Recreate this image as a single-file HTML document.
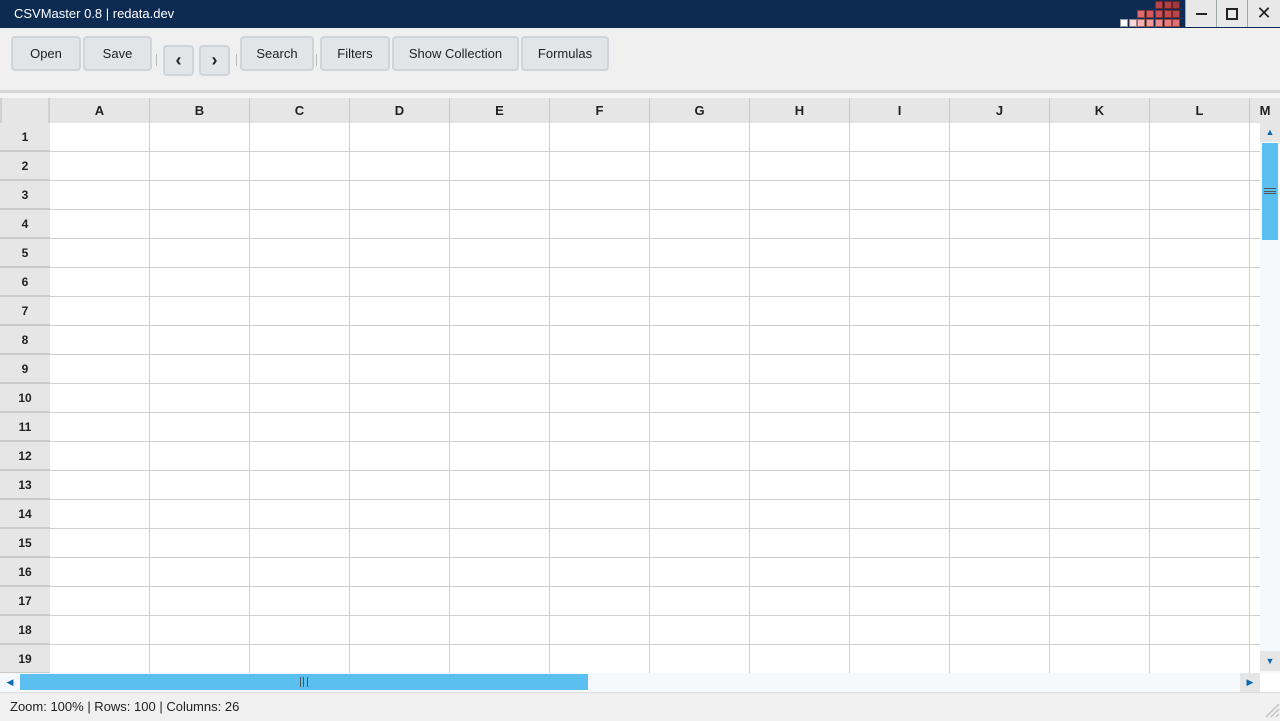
<!DOCTYPE html>
<html><head><meta charset="utf-8"><style>
*{margin:0;padding:0;box-sizing:border-box}
body{width:1280px;height:720px;overflow:hidden;background:#f0f0f0;font-family:"Liberation Sans",sans-serif;position:relative}
.a{position:absolute}
#title{left:0;top:0;width:1280px;height:28px;background:#0c2a52;color:#fff;font-size:13px;line-height:28px;padding-left:14px}
.sq{position:absolute;width:8px;height:8px;border:1px solid rgba(0,0,0,.4)}
.wb{position:absolute;top:0;height:27px;width:31px;background:#e8e8e8;border-left:1px solid #9aa;display:flex;align-items:center;justify-content:center}
.btn{position:absolute;height:35px;background:#e2e4e8;border:2px solid #cfd3da;border-radius:4px;font-size:13px;color:#222;display:flex;align-items:center;justify-content:center}
.sep{position:absolute;top:54px;width:1px;height:12px;background:#bbb}
.hc{position:absolute;top:98px;height:25px;background:#e6e6e6;border-right:1px solid #c8c8c8;font-size:13px;font-weight:bold;color:#222;text-align:center;line-height:25px}
.rh{position:absolute;left:0;width:50px;height:29px;background:#e6e6e6;border-bottom:2px solid #cacaca;font-size:12px;font-weight:bold;color:#222;text-align:center;line-height:28px}
</style></head><body>
<div id="title" class="a">CSVMaster 0.8 | redata.dev</div>
<div class="sq" style="left:1155px;top:1px;background:#b8474c"></div>
<div class="sq" style="left:1164px;top:1px;background:#b04045"></div>
<div class="sq" style="left:1172px;top:1px;background:#a23a3f"></div>
<div class="sq" style="left:1137px;top:10px;background:#e06a6e"></div>
<div class="sq" style="left:1146px;top:10px;background:#d45a5e"></div>
<div class="sq" style="left:1155px;top:10px;background:#cc5055"></div>
<div class="sq" style="left:1164px;top:10px;background:#c44a4f"></div>
<div class="sq" style="left:1172px;top:10px;background:#bb4449"></div>
<div class="sq" style="left:1120px;top:19px;background:#fff"></div>
<div class="sq" style="left:1129px;top:19px;background:#fcd6d6"></div>
<div class="sq" style="left:1137px;top:19px;background:#f9b2b3"></div>
<div class="sq" style="left:1146px;top:19px;background:#f59b9c"></div>
<div class="sq" style="left:1155px;top:19px;background:#f08a8b"></div>
<div class="sq" style="left:1164px;top:19px;background:#ea7c7e"></div>
<div class="sq" style="left:1172px;top:19px;background:#e46f71"></div>
<div class="wb" style="left:1185px"><div style="width:11px;height:2px;background:#222"></div></div>
<div class="wb" style="left:1216px"><div style="width:12px;height:12px;border:2px solid #222"></div></div>
<div class="wb" style="left:1247px;width:33px;font-size:18px;color:#222">✕</div>

<div class="btn" style="left:11px;top:36px;width:70px">Open</div>
<div class="btn" style="left:83px;top:36px;width:69px">Save</div>
<div class="sep" style="left:156px"></div>
<div class="btn" style="left:163px;top:45px;width:31px;height:31px;font-size:18px;font-weight:bold">‹</div>
<div class="btn" style="left:199px;top:45px;width:31px;height:31px;font-size:18px;font-weight:bold">›</div>
<div class="sep" style="left:236px"></div>
<div class="btn" style="left:240px;top:36px;width:74px">Search</div>
<div class="sep" style="left:316px"></div>
<div class="btn" style="left:320px;top:36px;width:70px">Filters</div>
<div class="btn" style="left:392px;top:36px;width:127px">Show Collection</div>
<div class="btn" style="left:521px;top:36px;width:88px">Formulas</div>

<div class="a" style="left:0;top:90px;width:1280px;height:3px;background:#d6d6d6"></div>
<div class="a" style="left:0;top:93px;width:1280px;height:5px;background:#f4f4f4"></div>
<div class="a" style="left:0;top:98px;width:1260px;height:575px;background:#fff;
background-image:repeating-linear-gradient(to right,transparent 0 99px,#cfcfcf 99px 100px),repeating-linear-gradient(to bottom,transparent 0 28px,#cfcfcf 28px 29px);background-position:50px 0,0 -4px"></div>
<div class="hc" style="left:0;width:50px;border-right:2px solid #d0d0d0"></div>
<div class="hc" style="left:50px;width:100px">A</div>
<div class="hc" style="left:150px;width:100px">B</div>
<div class="hc" style="left:250px;width:100px">C</div>
<div class="hc" style="left:350px;width:100px">D</div>
<div class="hc" style="left:450px;width:100px">E</div>
<div class="hc" style="left:550px;width:100px">F</div>
<div class="hc" style="left:650px;width:100px">G</div>
<div class="hc" style="left:750px;width:100px">H</div>
<div class="hc" style="left:850px;width:100px">I</div>
<div class="hc" style="left:950px;width:100px">J</div>
<div class="hc" style="left:1050px;width:100px">K</div>
<div class="hc" style="left:1150px;width:100px">L</div>
<div class="hc" style="left:1250px;width:30px;border:none">M</div>
<div class="a" style="left:0;top:98px;width:2px;height:575px;background:#d0d0d0"></div>
<div id="rows"></div>
<script>
var h='';for(var i=1;i<=19;i++){h+='<div class="rh" style="top:'+(123+(i-1)*29)+'px">'+i+'</div>';}
document.getElementById('rows').innerHTML=h;
</script>
<div class="a" style="left:1260px;top:123px;width:20px;height:550px;background:#f6f9fc"></div>
<div class="a" style="left:1260px;top:123px;width:20px;height:19px;background:#e6e6e6;color:#0a6ab0;font-size:9px;text-align:center;line-height:19px">▲</div>
<div class="a" style="left:1262px;top:143px;width:16px;height:97px;background:#5bbfef"></div>
<div class="a" style="left:1264px;top:188px;width:12px;height:6px;border-top:1px solid #555;border-bottom:1px solid #555"><div style="margin-top:2px;height:1px;background:#555"></div></div>
<div class="a" style="left:1260px;top:651px;width:20px;height:20px;background:#e6e6e6;color:#0a6ab0;font-size:9px;text-align:center;line-height:20px">▼</div>
<div class="a" style="left:0;top:673px;width:1260px;height:19px;background:#f6f9fc"></div>
<div class="a" style="left:0;top:673px;width:20px;height:19px;color:#0a6ab0;font-size:9px;text-align:center;line-height:19px">◀</div>
<div class="a" style="left:20px;top:674px;width:568px;height:16px;background:#5bbfef"></div>
<div class="a" style="left:300px;top:677px;width:8px;height:10px;border-left:1px solid #555;border-right:1px solid #555"><div style="margin-left:2px;width:1px;height:10px;background:#555"></div></div>
<div class="a" style="left:1240px;top:673px;width:20px;height:19px;background:#e6e6e6;color:#0a6ab0;font-size:9px;text-align:center;line-height:19px">▶</div>
<div class="a" style="left:1260px;top:673px;width:20px;height:19px;background:#fff"></div>
<div class="a" style="left:0;top:692px;width:1280px;height:28px;background:#f0f0f0;border-top:1px solid #ddd;font-size:13px;color:#222;line-height:28px;padding-left:10px">Zoom: 100% | Rows: 100 | Columns: 26</div>
<svg class="a" style="left:1262px;top:700px" width="18" height="18"><path d="M4 17L17 4M9 17L17 9M14 17L17 14" stroke="#bbb" stroke-width="1.2"/></svg>
</body></html>
